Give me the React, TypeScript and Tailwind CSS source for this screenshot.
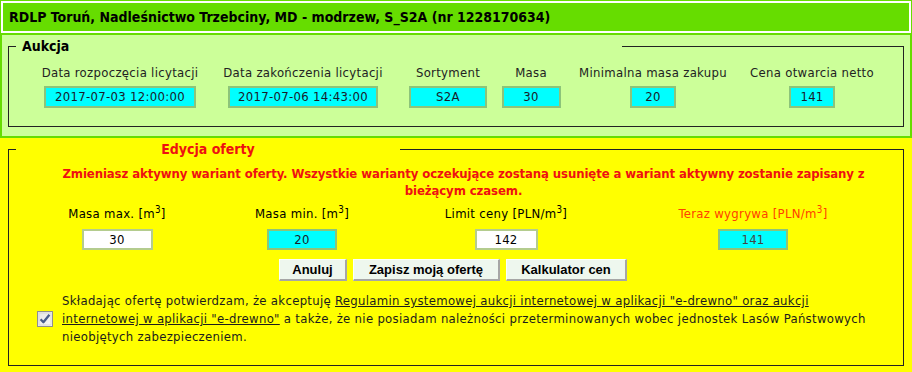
import React from "react";

const body = { fontFamily: '"DejaVu Sans Condensed", "DejaVu Sans", sans-serif' };

const auctionCols = [
  { label: "Data rozpoczęcia licytacji", value: "2017-07-03 12:00:00", col: "w-[170px]", input: "w-[152px]" },
  { label: "Data zakończenia licytacji", value: "2017-07-06 14:43:00", col: "w-[196px]", input: "w-[150px]" },
  { label: "Sortyment", value: "S2A", col: "w-[94px]", input: "w-[78px]" },
  { label: "Masa", value: "30", col: "w-[72px]", input: "w-[59px]" },
  { label: "Minimalna masa zakupu", value: "20", col: "w-[172px]", input: "w-[46px]" },
  { label: "Cena otwarcia netto", value: "141", col: "w-[146px]", input: "w-[46px]" },
];

const M3 = () => (
  <>
    m<sup>3</sup>
  </>
);

function CheckBox() {
  return (
    <svg width="16" height="16" viewBox="0 0 16 16" className="shrink-0">
      <defs>
        <linearGradient id="cb" x1="0" y1="0" x2="1" y2="1">
          <stop offset="0" stopColor="#e4e4e4" />
          <stop offset="1" stopColor="#fafafa" />
        </linearGradient>
      </defs>
      <rect x="0.5" y="0.5" width="15" height="15" fill="url(#cb)" stroke="#8f8f8f" />
      <rect x="2" y="2" width="12" height="12" fill="none" stroke="#d6d6d6" />
      <path d="M3.6 8.2 L6.4 11.2 L12.4 3.8" fill="none" stroke="#4a5d8c" strokeWidth="2.3" strokeLinejoin="round" />
    </svg>
  );
}

export default function App() {
  return (
    <div className="w-[912px] min-h-[372px] bg-[#ffff00] text-[13px] tracking-[0.3px] text-[#1c1c1c]" style={body}>
      {/* title */}
      <div className="bg-[#66dd00] px-px pt-px pb-[2px]">
        <div className="h-[32px] border-2 border-white bg-[#66dd00] pl-[6px] flex items-center font-bold text-[14px] tracking-normal text-black">
          RDLP Toruń, Nadleśnictwo Trzebciny, MD - modrzew, S_S2A (nr 1228170634)
        </div>
      </div>

      {/* Aukcja */}
      <div className="bg-[#ccff99] border-x-2 border-b-2 border-[#66dd00] pt-[3px] pb-[9px] px-[6px]">
        <fieldset className="border border-[#222] pt-[11px] pb-[18px]">
          <legend className="ml-[7px] w-[606px] pl-[6px] font-bold text-[14px] tracking-normal text-black leading-[16px]">Aukcja</legend>
          <div className="flex pl-[26px]">
            {auctionCols.map((c) => (
              <div key={c.label} className={`${c.col} flex flex-col items-center`}>
                <div className="whitespace-nowrap leading-[16px] text-[#222]">{c.label}</div>
                <div
                  className={`${c.input} mt-[5px] h-[22px] bg-[#00ffff] border-2 border-[#8cc47a] flex items-center justify-center text-[#1a1a2a]`}
                >
                  {c.value}
                </div>
              </div>
            ))}
          </div>
        </fieldset>
      </div>

      {/* Edycja oferty */}
      <div className="pt-[3px] pb-[6px] px-2">
        <fieldset className="border border-[#222] pt-[7px] pb-[19px]">
          <legend className="ml-[7px] w-[384px] font-bold text-[14px] tracking-normal text-[#ee1111] leading-[17px]">
            <div className="flex justify-center">Edycja oferty</div>
          </legend>

          <p className="text-center font-bold tracking-[-0.09px] text-[#ee1111] leading-[17px] pl-[15px] whitespace-nowrap">
            Zmieniasz aktywny wariant oferty. Wszystkie warianty oczekujące zostaną usunięte a wariant aktywny zostanie zapisany z
            <br />
            bieżącym czasem.
          </p>

          <div className="flex mt-[7px] pl-[15px]">
            <div className="w-[186px] flex flex-col items-center">
              <div className="leading-[16px] whitespace-nowrap text-black">
                Masa max. [<M3 />]
              </div>
              <div className="mt-[7px] w-[71px] h-[21px] bg-white border-2 border-[#b4cc8e] flex items-center justify-center text-black">30</div>
            </div>
            <div className="w-[184px] flex flex-col items-center">
              <div className="leading-[16px] whitespace-nowrap text-black">
                Masa min. [<M3 />]
              </div>
              <div className="mt-[7px] w-[70px] h-[21px] bg-[#00ffff] border-2 border-[#8cc47a] flex items-center justify-center text-[#1a1a2a]">20</div>
            </div>
            <div className="w-[224px] flex flex-col items-center">
              <div className="leading-[16px] whitespace-nowrap text-black">
                Limit ceny [PLN/<M3 />]
              </div>
              <div className="mt-[7px] w-[63px] h-[21px] bg-white border-2 border-[#b4cc8e] flex items-center justify-center text-black">142</div>
            </div>
            <div className="w-[270px] flex flex-col items-center">
              <div className="leading-[16px] whitespace-nowrap text-[#ff4000]">
                Teraz wygrywa [PLN/<M3 />]
              </div>
              <div className="mt-[7px] w-[70px] h-[21px] bg-[#00ffff] border-2 border-[#8cc47a] flex items-center justify-center text-[#444]">141</div>
            </div>
          </div>

          <div
            className="flex justify-center gap-[6px] mt-[9px] pr-[6px] font-bold tracking-normal text-black"
            style={{ fontFamily: '"Liberation Sans", Arial, sans-serif' }}
          >
            {[
              { t: "Anuluj", w: "w-[68px]" },
              { t: "Zapisz moją ofertę", w: "w-[147px]" },
              { t: "Kalkulator cen", w: "w-[121px]" },
            ].map((b) => (
              <button
                key={b.t}
                className={`${b.w} h-[22px] bg-[#eef7ee] border border-[#fbfffb] border-r-2 border-b-2 border-r-[#a6a6a6] border-b-[#a6a6a6] text-[13px]`}
              >
                {b.t}
              </button>
            ))}
          </div>

          <div className="flex items-center mt-[11px] pl-[28px]">
            <CheckBox />
            <p className="ml-[9px] leading-[18px] whitespace-nowrap text-[#1c1c1c]">
              Składając ofertę potwierdzam, że akceptuję{" "}
              <a className="underline">
                Regulamin systemowej aukcji internetowej w aplikacji "e-drewno" oraz aukcji
                <br />
                internetowej w aplikacji "e-drewno"
              </a>{" "}
              a także, że nie posiadam należności przeterminowanych wobec jednostek Lasów Państwowych
              <br />
              nieobjętych zabezpieczeniem.
            </p>
          </div>
        </fieldset>
      </div>
    </div>
  );
}
